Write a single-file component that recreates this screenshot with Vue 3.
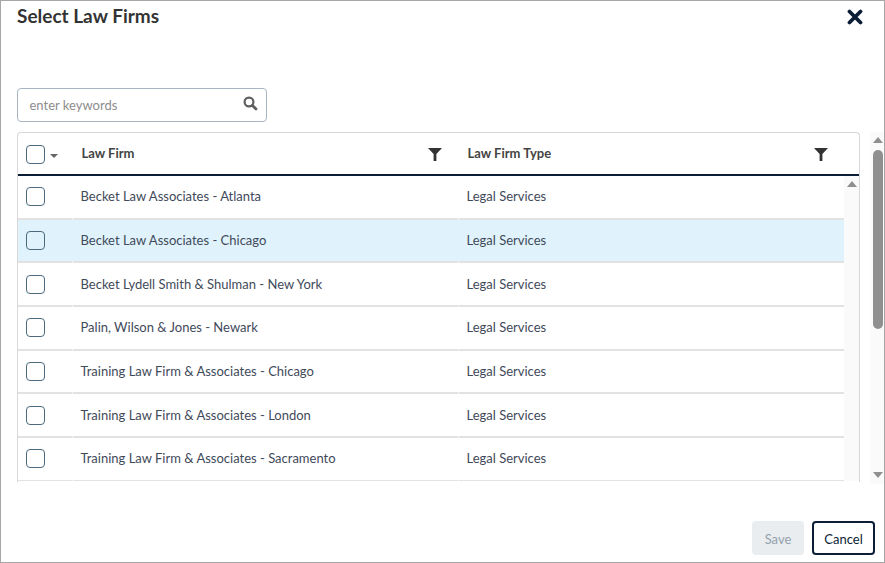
<script setup>
const firms = [
  'Becket Law Associates - Atlanta',
  'Becket Law Associates - Chicago',
  'Becket Lydell Smith & Shulman - New York',
  'Palin, Wilson & Jones - Newark',
  'Training Law Firm & Associates - Chicago',
  'Training Law Firm & Associates - London',
  'Training Law Firm & Associates - Sacramento'
]
</script>

<template>
  <div class="dialog">
    <header class="head">
      <h1 class="title">Select Law Firms</h1>
      <svg class="close" width="16" height="16" viewBox="0 0 16 16"><path d="M2.5 2.5 13.5 13.5M13.5 2.5 2.5 13.5" stroke="#0b1e36" stroke-width="3.8" stroke-linecap="round" fill="none"/></svg>
    </header>
    <div class="main">
      <div class="content">
        <div class="search">
          <span class="placeholder">enter keywords</span>
          <svg width="15" height="15" viewBox="0 0 15 15"><circle cx="6" cy="6" r="4.4" stroke="#5f5f5f" stroke-width="2.2" fill="none"/><path d="M9.4 9.4 13 13" stroke="#5f5f5f" stroke-width="2.8" stroke-linecap="round"/></svg>
        </div>
        <div class="table">
          <div class="thead">
            <div class="cell-check">
              <span class="box"></span>
              <span class="caret"></span>
            </div>
            <div class="th first">
              <span>Law Firm</span>
              <svg class="filter" width="14" height="13" viewBox="0 0 14 13"><path d="M0 0H14L8.4 6V13H5.6V6Z" fill="#333"/></svg>
            </div>
            <div class="th second">
              <span>Law Firm Type</span>
              <svg class="filter" width="14" height="13" viewBox="0 0 14 13"><path d="M0 0H14L8.4 6V13H5.6V6Z" fill="#333"/></svg>
            </div>
          </div>
          <div class="tbody">
            <div class="rows">
              <div v-for="(f, i) in firms" :key="f" class="row" :class="{ hl: i === 1 }">
                <div class="cell-check"><span class="box"></span></div>
                <div class="td first">{{ f }}</div>
                <div class="td second">Legal Services</div>
              </div>
            </div>
            <div class="inner-bar"><span class="up small"></span></div>
          </div>
        </div>
      </div>
      <div class="outer-bar">
        <span class="up"></span>
        <span class="thumb"></span>
        <span class="down"></span>
      </div>
    </div>
    <footer class="foot">
      <button class="btn save">Save</button>
      <button class="btn cancel">Cancel</button>
    </footer>
  </div>
</template>

<style>
html, body { margin: 0; background: #fff; }
</style>

<style scoped>
.dialog {
  box-sizing: border-box;
  width: 885px;
  height: 563px;
  border: 1px solid #a6a6a6;
  font-family: Lato, sans-serif;
  color: #3c4654;
  display: flex;
  flex-direction: column;
  overflow: hidden;
  background: #fff;
}
.head {
  display: flex;
  justify-content: space-between;
  align-items: flex-start;
  height: 87px;
  padding: 0 21px 0 16px;
  flex: none;
}
.title {
  margin: 3px 0 0;
  font-size: 19px;
  line-height: 24px;
  font-weight: 700;
  color: #333;
}
.close { margin-top: 8px; }
.main {
  display: flex;
  flex: none;
  height: 396px;
}
.content {
  width: 843px;
  margin-left: 16px;
  flex: none;
}
.search {
  box-sizing: border-box;
  width: 250px;
  height: 34px;
  border: 1px solid #a8b6c4;
  border-radius: 4px;
  display: flex;
  justify-content: space-between;
  align-items: center;
  padding: 0 8px 4px 11.5px;
  margin-bottom: 10px;
}
.placeholder { font-size: 13px; color: #8d8d8d; padding-top: 4px; }
.table {
  box-sizing: border-box;
  height: 350px;
  border: 1px solid #d8d8d8;
  border-bottom: 0;
  border-radius: 4px 4px 0 0;
  overflow: hidden;
}
.thead {
  display: flex;
  height: 43px;
  box-sizing: border-box;
  border-bottom: 2px solid #0b1e36;
  align-items: center;
}
.cell-check {
  width: 55px;
  flex: none;
  display: flex;
  align-items: center;
  padding-left: 8px;
  box-sizing: border-box;
}
.thead .cell-check { padding-top: 1px; }
.box {
  box-sizing: border-box;
  width: 19px;
  height: 19px;
  border: 1px solid #4b6a7d;
  border-radius: 4px;
  display: block;
}
.caret {
  margin: 3px 0 0 5px;
  border-left: 4px solid transparent;
  border-right: 4px solid transparent;
  border-top: 4px solid #666;
}
.th {
  display: flex;
  align-items: center;
  justify-content: space-between;
  font-size: 13px;
  font-weight: 700;
  color: #444;
  box-sizing: border-box;
}
.th span { padding-bottom: 2px; }
.th.first { width: 386px; padding: 0 17px 0 8.5px; }
.th.second { width: 386px; padding: 0 17px 0 8.5px; }
.filter { margin-top: 2px; }
.tbody { display: flex; height: 305px; overflow: hidden; }
.rows { width: 826px; flex: none; }
.row {
  position: relative;
  display: flex;
  align-items: center;
  height: 43.67px;
  box-sizing: border-box;
  border-bottom: 2px solid #e2e2e2;
}
.row::before, .row::after {
  content: "";
  position: absolute;
  bottom: -2px;
  width: 1px;
  height: 2px;
  background: #f4f4f4;
}
.row::before { left: 54px; }
.row::after { left: 440px; }
.row.hl { background: #e0f3fc; }
.td { font-size: 13px; color: #3f4a5a; box-sizing: border-box; padding-bottom: 1px; }
.td.first { width: 386px; padding-left: 7.5px; }
.td.second { padding-left: 7.5px; }
.inner-bar {
  width: 15px;
  flex: none;
  background: #fafafa;
  display: flex;
  justify-content: center;
  padding-top: 5px;
  box-sizing: border-box;
}
.up, .down {
  width: 0;
  height: 0;
  border-left: 5px solid transparent;
  border-right: 5px solid transparent;
  display: block;
}
.up { border-bottom: 6px solid #8f8f8f; }
.down { border-top: 6px solid #8f8f8f; }
.outer-bar {
  width: 15px;
  margin-left: 10px;
  flex: none;
  display: flex;
  flex-direction: column;
  align-items: center;
  padding-top: 49px;
  box-sizing: border-box;
  margin-top: 0;
  height: 396px;
  background: linear-gradient(#fff 44px, #fafafa 44px);
}
.thumb {
  width: 10px;
  height: 179px;
  border-radius: 5px;
  background: #8f8f8f;
  margin: 7px 0 143px;
}
.foot {
  display: flex;
  justify-content: flex-end;
  gap: 8px;
  padding: 37px 9px 0 0;
}
.btn {
  box-sizing: border-box;
  height: 34px;
  border-radius: 4px;
  font-family: Lato, sans-serif;
  font-size: 13px;
  padding: 1px 0 0;
}
.save {
  width: 52px;
  border: 0;
  background: #e9edf0;
  color: #93a1ad;
}
.cancel {
  width: 63px;
  border: 2px solid #0b1e36;
  background: #fff;
  color: #0b1e36;
}
</style>
